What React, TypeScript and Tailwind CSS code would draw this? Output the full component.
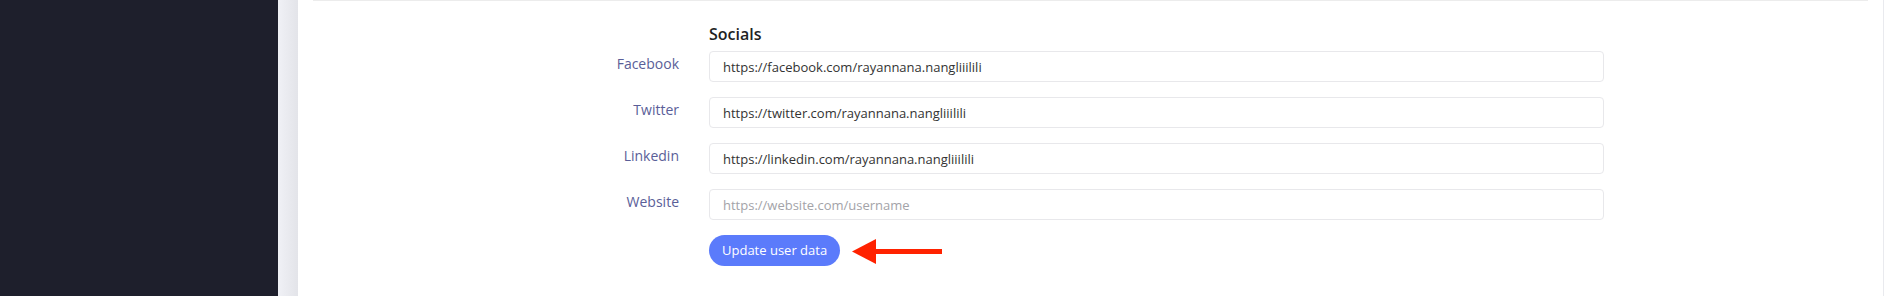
import React from 'react';

interface SocialField {
  label: string;
  value: string;
  placeholder: string;
}

const fields: SocialField[] = [
  { label: 'Facebook', value: 'https://facebook.com/rayannana.nangliiilili', placeholder: 'https://facebook.com/username' },
  { label: 'Twitter', value: 'https://twitter.com/rayannana.nangliiilili', placeholder: 'https://twitter.com/username' },
  { label: 'Linkedin', value: 'https://linkedin.com/rayannana.nangliiilili', placeholder: 'https://linkedin.com/username' },
  { label: 'Website', value: '', placeholder: 'https://website.com/username' },
];

const App: React.FC = () => {
  return (
    <div className="flex h-[296px] w-full overflow-hidden bg-[#e9eaee] font-['Open_Sans',sans-serif]">
      {/* Sidebar */}
      <div className="w-[278px] shrink-0 bg-[#1e1f2c]"></div>
      <div className="w-[20px] shrink-0 bg-gradient-to-r from-[#f0f1f6] to-[#e3e4e9]"></div>

      {/* Card */}
      <div className="flex-1 bg-white px-[15px] mr-[1px]">
        <div className="border-t border-[#ececec]">
          <div className="ml-[396px] pt-[21px]">
            <h2 className="text-[16px] leading-[24px] font-semibold text-[#1f1f24] mb-[5px]">Socials</h2>
          </div>

          <div className="flex flex-col gap-[15px]">
            {fields.map(field => (
              <div key={field.label} className="flex items-start">
                <label className="w-[366px] shrink-0 pt-[3px] text-right text-[14px] leading-[20px] text-[#5a5e98]">
                  {field.label}
                </label>
                <input
                  type="text"
                  defaultValue={field.value}
                  placeholder={field.placeholder}
                  className="ml-[30px] h-[31px] w-[895px] rounded-[4px] border border-[#e8e8eb] px-[13px] text-[13px] text-[#333333] placeholder:text-[#a3a3a8] outline-none"
                />
              </div>
            ))}

            <div className="flex items-center pl-[396px]">
              <button className="h-[31px] rounded-full bg-[#5b7bfb] px-[13px] text-[13px] font-medium text-white">
                Update user data
              </button>
              <svg width="90" height="26" viewBox="0 0 90 26" className="ml-[12px] mt-[2px]">
                <polygon points="0,12.5 24,0 24,25" fill="#ff2200" />
                <rect x="22" y="10" width="68" height="5" fill="#ff2200" />
              </svg>
            </div>
          </div>
        </div>
      </div>
    </div>
  );
};

export default App;
